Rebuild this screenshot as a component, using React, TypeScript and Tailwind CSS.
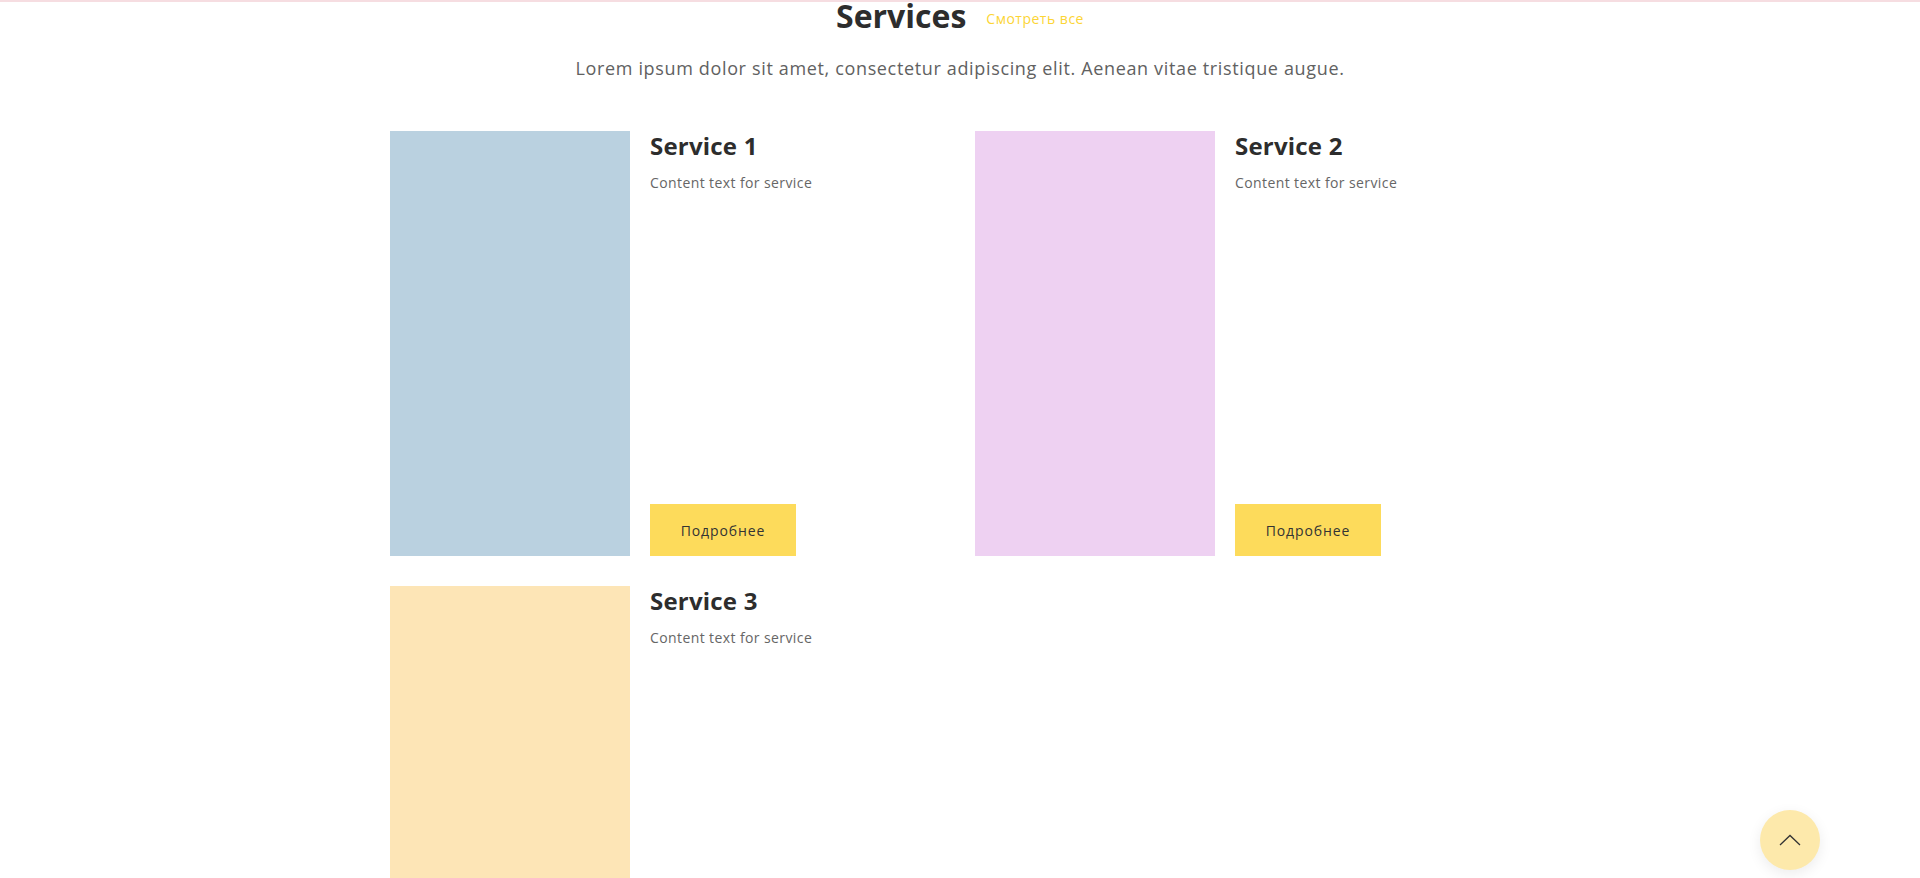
import React from "react";

const font = { fontFamily: '"Open Sans", "Liberation Sans", sans-serif' };

type Svc = { title: string; color: string; button: boolean };

const services: Svc[] = [
  { title: "Service 1", color: "bg-[#bad1e0]", button: true },
  { title: "Service 2", color: "bg-[#eed1f2]", button: true },
  { title: "Service 3", color: "bg-[#fde5b6]", button: false },
];

function Card({ s }: { s: Svc }) {
  return (
    <div className="px-[15px] mb-[30px]">
      <div className="flex">
        <div className={`w-[240px] h-[425px] shrink-0 ${s.color}`} />
        <div className="ml-5 flex flex-col flex-1">
          <h3 className="text-[24px] leading-[29px] font-bold text-[#2d2d2d] tracking-[0.2px]">{s.title}</h3>
          <p className="mt-[13px] text-[14px] leading-[20px] text-[#666666] tracking-[0.4px]">Content text for service</p>
          {s.button && (
            <button className="mt-auto w-[146px] h-[52px] bg-[#fddb5b] text-[14px] text-[#333333] tracking-[0.9px]">
              Подробнее
            </button>
          )}
        </div>
      </div>
    </div>
  );
}

export default function App() {
  return (
    <div className="min-h-screen bg-white border-t-2 border-[#f6dde1]" style={font}>
      <div className="w-[1170px] mx-auto">
        <div className="flex justify-center items-center gap-5">
          <h2 className="text-[32px] leading-[28px] font-bold text-[#2d2d2d]">Services</h2>
          <a className="text-[14px] text-[#fcd535] mt-[5px] tracking-[0.5px]">Смотреть все</a>
        </div>
        <p className="mt-[25px] text-center text-[18px] leading-[27px] text-[#616161] tracking-[0.65px]">
          Lorem ipsum dolor sit amet, consectetur adipiscing elit. Aenean vitae tristique augue.
        </p>
        <div className="grid grid-cols-2 mt-[49px]">
          {services.map((s) => (
            <Card key={s.title} s={s} />
          ))}
        </div>
      </div>
      <button className="fixed bottom-[8px] right-[100px] w-[60px] h-[60px] rounded-full bg-[#fde9ab] shadow-[0_4px_14px_rgba(0,0,0,0.08)] flex items-center justify-center">
        <svg width="22" height="12" viewBox="0 0 22 12" fill="none">
          <path d="M1 11 L11 1.5 L21 11" stroke="#333" strokeWidth="1.3" />
        </svg>
      </button>
    </div>
  );
}
